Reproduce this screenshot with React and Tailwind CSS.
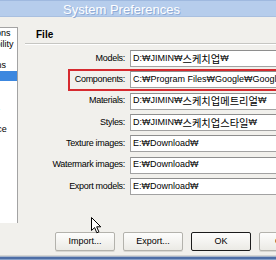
import React from "react";

const FONT = "font-['Liberation_Sans','Noto_Sans_CJK_KR',sans-serif]";

const NAV_ITEMS = [
  "Applications",
  "Compatibility",
  "Drawing",
  "Extensions",
  "Files",
  "General",
  "OpenGL",
  "Shortcuts",
  "Template",
  "Workspace",
];

const FIELDS = [
  { label: "Models", value: "D:₩JIMIN₩스케치업₩" },
  { label: "Components", value: "C:₩Program Files₩Google₩Google Sketchup₩", marked: true },
  { label: "Materials", value: "D:₩JIMIN₩스케치업메트리얼₩" },
  { label: "Styles", value: "D:₩JIMIN₩스케치업스타일₩" },
  { label: "Texture images", value: "E:₩Download₩" },
  { label: "Watermark images", value: "E:₩Download₩" },
  { label: "Export models", value: "E:₩Download₩" },
];

// korean runs get the CJK font, a bit bigger than the latin text
const PathText = ({ value }) =>
  value.split(/([가-힣]+)/).map((part, i) =>
    /[가-힣]/.test(part) ? (
      <span key={i} className="text-[10.25px] font-['Noto_Sans_CJK_KR',sans-serif]">
        {part}
      </span>
    ) : (
      <span key={i}>{part}</span>
    ),
  );

const Button = ({ children, primary }) => (
  <button
    className={`w-[60px] h-[19px] shrink-0 flex items-center justify-center text-[9px] text-black rounded-[2px] bg-[linear-gradient(to_bottom,#fdfdfc,#ebeae5)] border ${
      primary ? "border-[#1c1c1c]" : "border-[#b3b2ac] shadow-[0_1px_0_#d8d7d2]"
    }`}
  >
    {children}
  </button>
);

const Cursor = () => (
  <svg
    className="absolute left-[91px] top-[217px]"
    width="11"
    height="17"
    viewBox="0 0 11 17"
  >
    <path
      d="M0.5 0.5 L0.5 13.5 L3.6 10.6 L5.8 15.8 L7.9 14.9 L5.7 9.8 L9.8 9.8 Z"
      fill="#fff"
      stroke="#000"
      strokeWidth="1"
      strokeLinejoin="round"
    />
  </svg>
);

export default function App() {
  return (
    <div className={`relative w-[276px] h-[260px] overflow-hidden bg-[#f1f0ec] flex flex-col ${FONT}`}>
      {/* title bar */}
      <div className="h-[17px] shrink-0 flex items-center pl-[63px] pt-[1px] bg-[#b6cdec] border-t border-t-[#9fb9df] border-b border-b-[#a9c0e0]">
        <span className="text-[13px] leading-none text-white whitespace-nowrap [text-shadow:1px_1px_0_#8fabd6]">
          System Preferences
        </span>
      </div>

      <div className="h-[207px] shrink-0 flex">
        {/* nav list, cut off at the left edge */}
        <div className="mt-[10px] h-[196px] w-[79px] -ml-[61px] shrink-0 bg-white border-t border-r border-[#a3a3a3] flex flex-col">
          {NAV_ITEMS.map((item) => (
            <div
              key={item}
              className={`h-[10.7px] leading-[10.7px] text-[9px] pl-[23px] whitespace-nowrap ${
                item === "Files" ? "bg-[#3c87df] text-white" : "text-black"
              }`}
            >
              {item}
            </div>
          ))}
        </div>

        <div className="flex-1 flex flex-col min-w-0">
          <div className="mt-[12px] h-[11px] leading-[11px] pl-[18px] text-[10px] font-bold text-black">
            File
          </div>
          <div className="mt-[3px] ml-[7px] flex flex-col">
            <div className="h-[1px] bg-[#c6c6c2]" />
            <div className="h-[1px] bg-white" />
          </div>

          <div className="mt-[5px] ml-[7px] w-[265px] flex flex-col gap-[4.33px]">
            {FIELDS.map((f) => (
              <div key={f.label} className="relative grid grid-cols-[100px_1fr] gap-x-[5px] items-center h-[17px]">
                {f.marked && (
                  <div className="absolute left-[43px] -top-[2px] -bottom-[3px] -right-[10px] border-2 border-[#d62a2f]" />
                )}
                <div className="text-right text-[9px] tracking-[-0.3px] text-black whitespace-nowrap">
                  {f.label}:
                </div>
                <div className="h-[17px] bg-white border border-[#a2a2a2] border-t-[#8e8e8e] flex items-center pl-[2px] text-[9px] text-black whitespace-nowrap overflow-hidden">
                  <PathText value={f.value} />
                </div>
              </div>
            ))}
          </div>
        </div>
      </div>

      <div className="mt-[8px] pl-[55px] flex gap-[8px]">
        <Button>Import...</Button>
        <Button>Export...</Button>
        <Button primary>OK</Button>
        <Button>Cancel</Button>
      </div>

      <div className="mt-auto flex flex-col">
        <div className="h-[1px] bg-[#d6d6d3]" />
        <div className="h-[1px] bg-[#a9b6ca]" />
        <div className="h-[2px] bg-[#4e6ea6]" />
        <div className="h-[1px] bg-[#86a0c9]" />
      </div>

      <Cursor />
    </div>
  );
}
